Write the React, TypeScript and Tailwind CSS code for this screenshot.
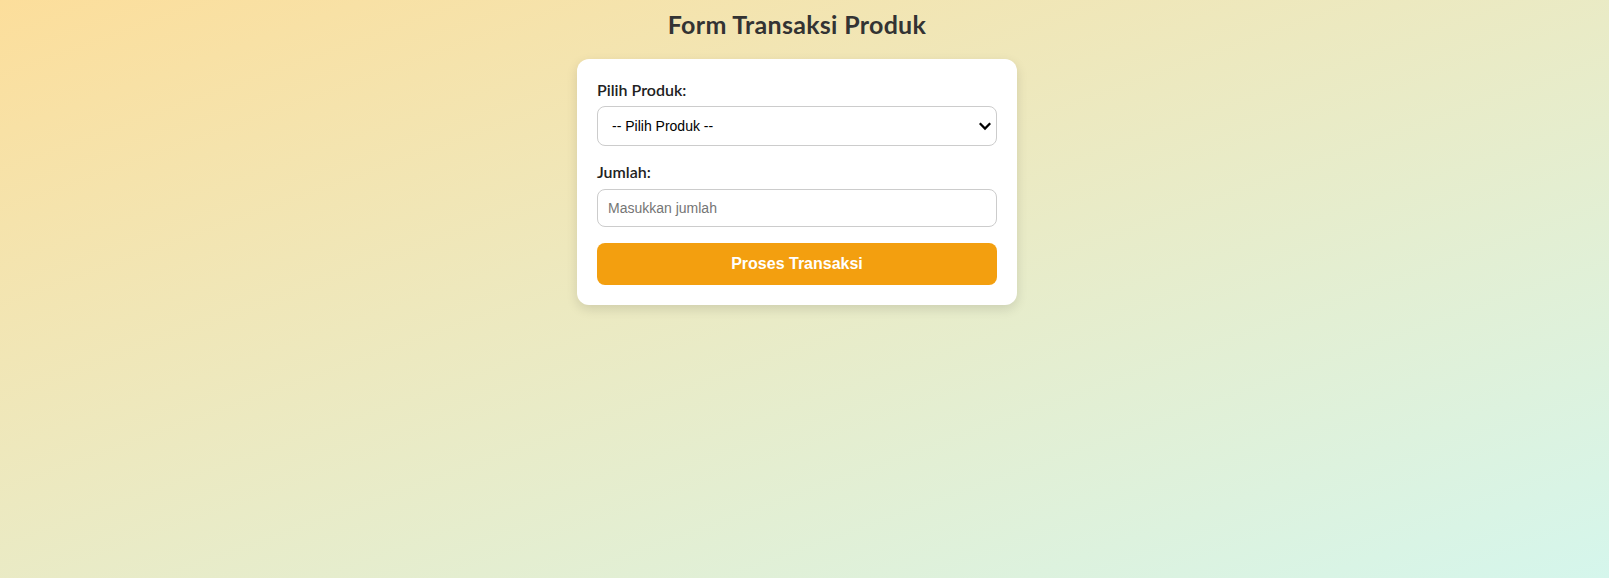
import { useState } from "react";

const App = () => {
  const [produk, setProduk] = useState("");
  const [jumlah, setJumlah] = useState("");

  return (
    <div className="min-h-screen w-full bg-gradient-to-br from-[#fcde9b] to-[#d5f6ec] pt-[9px] pr-[15px] font-['Lato',sans-serif] text-[#333]">
      <h2 className="text-center text-[25px] font-bold leading-[30px] mb-[20px] text-[#333] tracking-[0.3px]">
        Form Transaksi Produk
      </h2>
      <div className="mx-auto w-[440px] rounded-[12px] bg-white p-[20px] shadow-[0_4px_12px_rgba(0,0,0,0.12)]">
        <label className="block text-[16px] font-semibold leading-[20px] mb-[6px] mt-[1px] text-[#222]">
          Pilih Produk:
        </label>
        <div className="relative mb-[16px]">
          <select
            value={produk}
            onChange={(e) => setProduk(e.target.value)}
            className="block w-full h-[40px] appearance-none rounded-[8px] border border-[#ccc] bg-white pl-[14px] pr-[30px] text-[14px] text-black font-['Liberation_Sans',Arial,sans-serif] outline-none"
          >
            <option value="">-- Pilih Produk --</option>
            <option value="a">Produk A</option>
            <option value="b">Produk B</option>
          </select>
          <svg
            className="pointer-events-none absolute right-[5px] top-1/2 -translate-y-1/2"
            width="14"
            height="14"
            viewBox="0 0 14 14"
          >
            <path d="M1.8 4.3 L7 9.5 L12.2 4.3" fill="none" stroke="#000" strokeWidth="2.3" />
          </svg>
        </div>
        <label className="block text-[16px] font-semibold leading-[20px] mb-[7px] text-[#222]">
          Jumlah:
        </label>
        <input
          type="number"
          value={jumlah}
          onChange={(e) => setJumlah(e.target.value)}
          placeholder="Masukkan jumlah"
          className="block w-full h-[38px] rounded-[8px] border border-[#ccc] bg-white px-[10px] text-[14px] text-black placeholder:text-[#757575] font-['Liberation_Sans',Arial,sans-serif] outline-none mb-[16px]"
        />
        <button className="block w-full h-[42px] rounded-[8px] bg-[#f39f0f] text-white text-[16px] font-bold font-['Liberation_Sans',Arial,sans-serif]">
          Proses Transaksi
        </button>
      </div>
    </div>
  );
};

export default App;
